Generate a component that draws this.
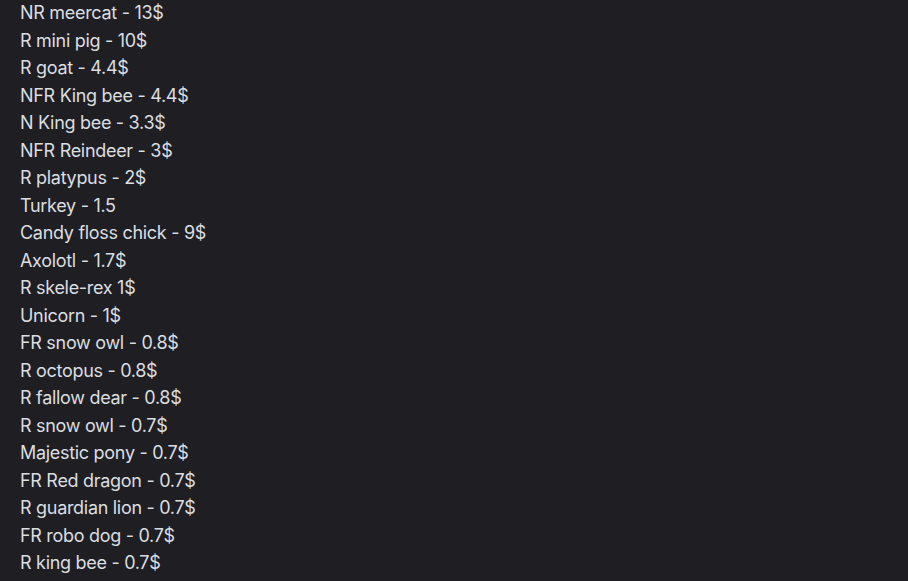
import React from "react";

const items = [
  "NR meercat - 13$",
  "R mini pig - 10$",
  "R goat - 4.4$",
  "NFR King bee - 4.4$",
  "N King bee - 3.3$",
  "NFR Reindeer - 3$",
  "R platypus - 2$",
  "Turkey - 1.5",
  "Candy floss chick - 9$",
  "Axolotl - 1.7$",
  "R skele-rex 1$",
  "Unicorn - 1$",
  "FR snow owl - 0.8$",
  "R octopus - 0.8$",
  "R fallow dear - 0.8$",
  "R snow owl - 0.7$",
  "Majestic pony - 0.7$",
  "FR Red dragon - 0.7$",
  "R guardian lion - 0.7$",
  "FR robo dog - 0.7$",
  "R king bee - 0.7$",
  "R mouse - 0.7$",
];

export default function App() {
  return (
    <div className="w-[908px] h-[581px] overflow-hidden bg-[#1f1f23]">
      <div
        className="pl-[20px] -mt-[1px] text-[18px] leading-[27.5px] text-[#dbdee1]"
        style={{ fontFamily: "Inter, 'Noto Sans', sans-serif" }}
      >
        {items.map((t, i) => (
          <div key={i} className="tracking-[-0.3px]">{t}</div>
        ))}
      </div>
    </div>
  );
}
